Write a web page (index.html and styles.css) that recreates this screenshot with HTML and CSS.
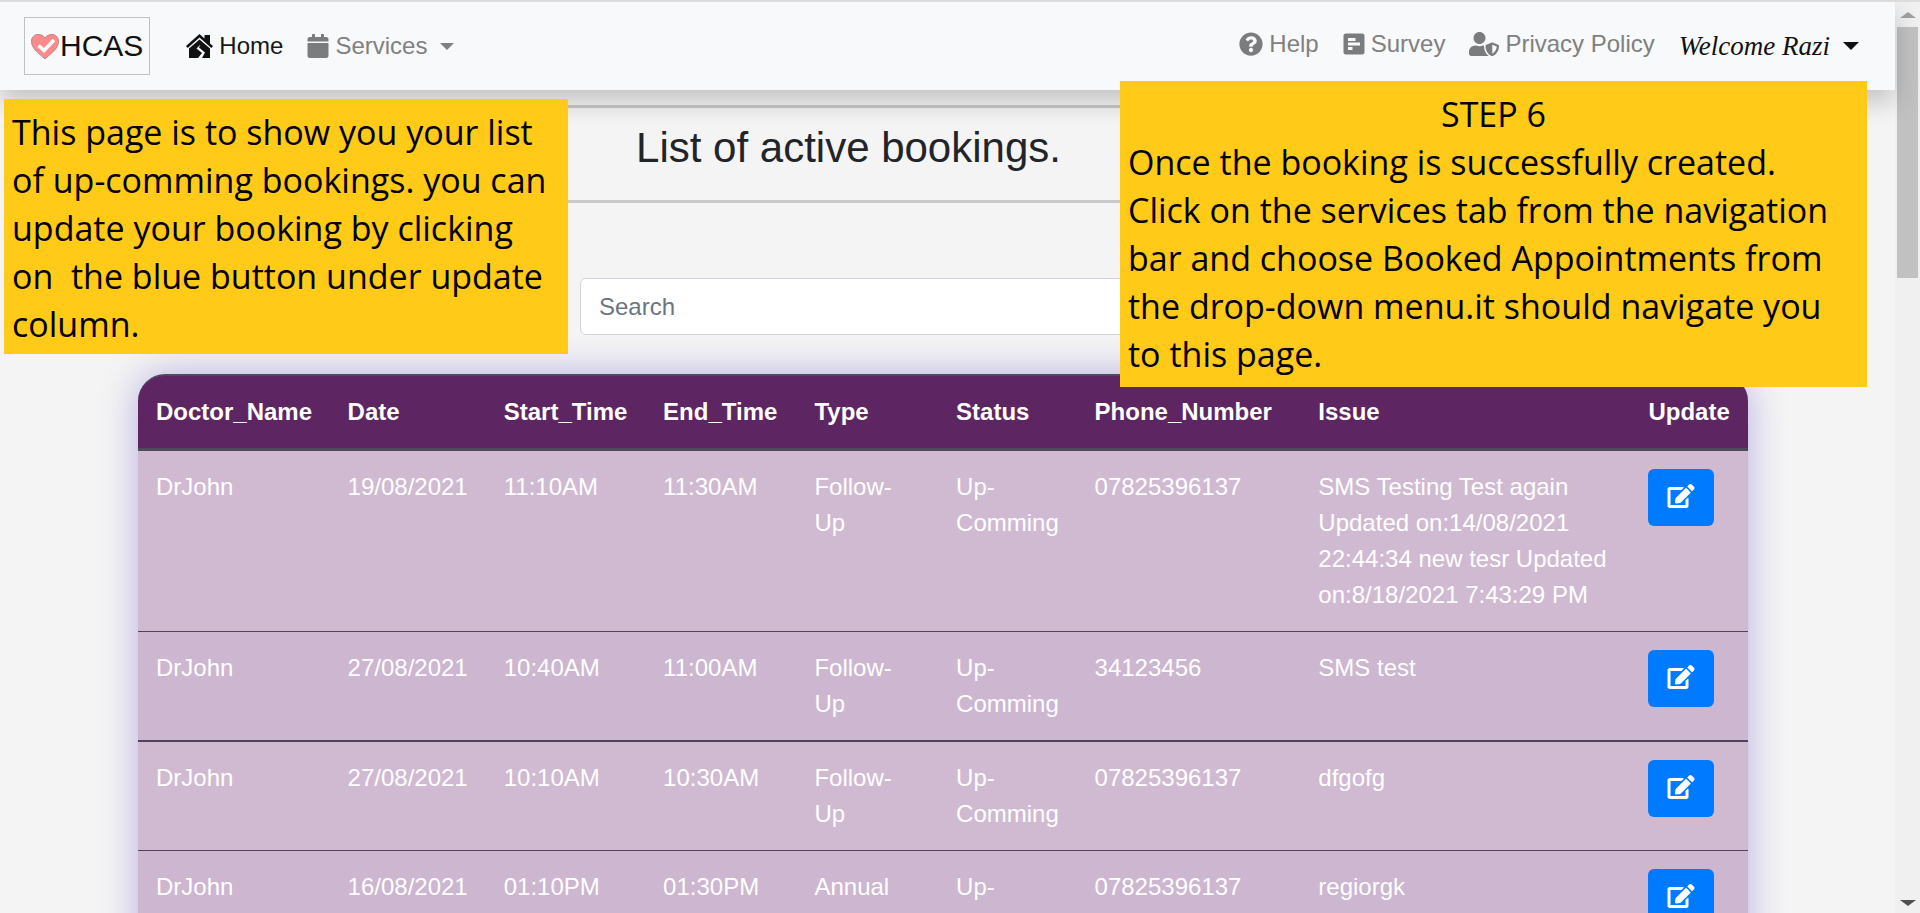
FILE: index.html
```html
<!DOCTYPE html>
<html lang="en">
<head>
<meta charset="utf-8">
<title>HCAS - Active bookings</title>
<link rel="stylesheet" href="styles.css">
</head>
<body>
<svg class="sprite" aria-hidden="true">
  <symbol id="edit" viewBox="0 0 576 512"><path d="M402.600 83.200l90.200 90.200c3.800 3.800 3.800 10 0 13.800L274.400 405.600l-92.800 10.300c-12.400 1.400-22.900-9.100-21.500-21.500l10.300-92.800L388.800 83.200c3.800-3.800 10-3.800 13.800 0zm162-22.900l-48.800-48.800c-15.200-15.200-39.900-15.200-55.200 0l-35.400 35.400c-3.800 3.800-3.800 10 0 13.800l90.200 90.200c3.800 3.800 10 3.800 13.800 0l35.400-35.400c15.200-15.300 15.200-40 0-55.200zM384 346.200V448H64V128h229.800c3.200 0 6.200-1.300 8.500-3.500l40-40c7.600-7.600 2.200-20.500-8.500-20.500H48C21.500 64 0 85.500 0 112v352c0 26.500 21.500 48 48 48h352c26.500 0 48-21.500 48-48V306.200c0-10.700-12.900-16-20.500-8.500l-40 40c-2.200 2.300-3.500 5.300-3.500 8.500z"/></symbol>
</svg>
<div class="window">
  <div class="page">
    <nav class="navbar">
      <a class="brand" href="#">
        <svg class="heart" viewBox="0 0 30 28" aria-hidden="true"><path d="M15 27C10 22 1.500 17 1.500 9.500 1.500 5 4.500 2.500 8 2.500c3 0 5.500 1 7 3.500 1.500-2.500 4-3.500 7-3.500 3.500 0 6.500 2.500 6.500 7C28.500 17 20 22 15 27z" fill="#fb8a8d" stroke="#b58a8e"/><path d="M8.500 13.500l5.500 5L24 8" fill="none" stroke="#fff" stroke-width="3.500"/></svg>HCAS</a>
      <ul class="links">
        <li><a class="link active" href="#"><svg class="ico home" viewBox="0 0 27 24" aria-hidden="true"><path d="M0 12L13.500 0l5 4.500V1H24v8.500L27 12l-1.700 2L13.500 3.500 1.700 14z"/><path fill-rule="evenodd" d="M13.500 5.500L24 14.500V24H16l3-5.500-6-5 1.500-3-4 4 5.500 4.500-4 5H3v-9.500z"/></svg>Home</a></li>
        <li><a class="link" href="#"><svg class="ico cal" viewBox="0 0 448 512" aria-hidden="true"><path d="M12 192h424c6.600 0 12 5.400 12 12v260c0 26.500-21.500 48-48 48H48c-26.500 0-48-21.500-48-48V204c0-6.600 5.400-12 12-12zm436-44v-36c0-26.500-21.500-48-48-48h-48V12c0-6.600-5.400-12-12-12h-40c-6.600 0-12 5.400-12 12v52H160V12c0-6.600-5.400-12-12-12h-40c-6.600 0-12 5.400-12 12v52H48C21.500 64 0 85.500 0 112v36c0 6.600 5.400 12 12 12h424c6.600 0 12-5.400 12-12z"/></svg>Services<span class="caret"></span></a></li>
      </ul>
      <ul class="links right">
        <li><a class="link" href="#"><svg class="ico round" viewBox="0 0 512 512" aria-hidden="true"><path d="M504 256c0 137-111 248-248 248S8 393 8 256C8 119.100 119 8 256 8s248 111.100 248 248zM262.700 90c-54.500 0-89.300 23-116.500 63.800-3.500 5.300-2.400 12.400 2.700 16.300l34.700 26.300c5.200 3.900 12.600 3 16.700-2.100 17.900-22.700 30.100-35.800 57.300-35.800 20.400 0 45.700 13.100 45.700 33 0 15-12.400 22.700-32.500 34C247.100 238.500 216 254.900 216 296v4c0 6.600 5.400 12 12 12h56c6.600 0 12-5.400 12-12v-1.300c0-28.500 83.200-29.600 83.200-106.700 0-58-60.200-102-116.500-102zM256 338c-25.400 0-46 20.600-46 46s20.600 46 46 46 46-20.600 46-46-20.600-46-46-46z"/></svg>Help</a></li>
        <li><a class="link" href="#"><svg class="ico cal" viewBox="0 0 448 512" aria-hidden="true"><path fill-rule="evenodd" d="M48 32h352c26.500 0 48 21.500 48 48v352c0 26.500-21.500 48-48 48H48c-26.500 0-48-21.500-48-48V80c0-26.500 21.500-48 48-48zM96 128v64h160v-64zM96 224v64h256v-64zM96 320v64h96v-64z"/></svg>Survey</a></li>
        <li><a class="link" href="#"><svg class="ico user" viewBox="0 0 640 512" aria-hidden="true"><path d="M622.300 271.100l-115.200-45c-4.100-1.600-12.600-3.700-22.200 0l-115.200 45c-10.700 4.200-17.700 14-17.700 24.900 0 111.600 68.700 188.800 132.900 213.900 9.600 3.700 18 1.600 22.200 0C558.400 489.900 640 420.500 640 296c0-10.900-7-20.700-17.700-24.900zM496 462.400V273.300l95.500 37.300c-5.600 87.100-60.900 135.400-95.500 151.800zM224 256c70.700 0 128-57.300 128-128S294.700 0 224 0 96 57.300 96 128s57.300 128 128 128zm96 40c0-2.500.8-4.800 1.100-7.200-2.500-.1-4.900-.8-7.500-.8h-16.700c-22.200 10.200-46.900 16-72.900 16s-50.600-5.800-72.900-16h-16.700C60.200 288 0 348.200 0 422.400V464c0 26.500 21.500 48 48 48h352c6.800 0 13.300-1.500 19.200-4-54-42.900-99.200-116.700-99.200-212z"/></svg>Privacy Policy</a></li>
        <li><a class="link welcome" href="#">Welcome Razi<span class="caret big"></span></a></li>
      </ul>
    </nav>
    <main class="main">
      <header class="title"><h1>List of active bookings.</h1></header>
      <div class="search"><input type="search" aria-label="Search" placeholder="Search"></div>
      <div class="card">
        <table class="bookings">
          <colgroup><col class="c-doc"><col class="c-date"><col class="c-start"><col class="c-end"><col class="c-type"><col class="c-status"><col class="c-phone"><col class="c-issue"><col class="c-upd"></colgroup>
          <thead><tr><th>Doctor_Name</th><th>Date</th><th>Start_Time</th><th>End_Time</th><th>Type</th><th>Status</th><th>Phone_Number</th><th>Issue</th><th>Update</th></tr></thead>
          <tbody>
            <tr><td>DrJohn</td><td>19/08/2021</td><td>11:10AM</td><td>11:30AM</td><td>Follow-Up</td><td>Up-Comming</td><td>07825396137</td><td>SMS Testing Test again Updated on:14/08/2021 22:44:34 new tesr Updated on:8/18/2021 7:43:29 PM</td><td><button class="btn" type="button" aria-label="Update booking"><svg><use href="#edit"/></svg></button></td></tr>
            <tr><td>DrJohn</td><td>27/08/2021</td><td>10:40AM</td><td>11:00AM</td><td>Follow-Up</td><td>Up-Comming</td><td>34123456</td><td>SMS test</td><td><button class="btn" type="button" aria-label="Update booking"><svg><use href="#edit"/></svg></button></td></tr>
            <tr><td>DrJohn</td><td>27/08/2021</td><td>10:10AM</td><td>10:30AM</td><td>Follow-Up</td><td>Up-Comming</td><td>07825396137</td><td>dfgofg</td><td><button class="btn" type="button" aria-label="Update booking"><svg><use href="#edit"/></svg></button></td></tr>
            <tr><td>DrJohn</td><td>16/08/2021</td><td>01:10PM</td><td>01:30PM</td><td>Annual</td><td>Up-Comming</td><td>07825396137</td><td>regiorgk</td><td><button class="btn" type="button" aria-label="Update booking"><svg><use href="#edit"/></svg></button></td></tr>
          </tbody>
        </table>
      </div>
    </main>
  </div>
  <div class="scrollbar" aria-hidden="true"><span class="arrow up"></span><span class="thumb"></span><span class="arrow down"></span></div>
  <aside class="note note-left">This page is to show you your list<br>of up-comming bookings. you can<br>update your booking by clicking<br>on&nbsp; the blue button under update<br>column.</aside>
  <aside class="note note-right"><h2>STEP 6</h2>Once the booking is successfully created.<br>Click on the services tab from the navigation<br>bar and choose Booked Appointments from<br>the drop-down menu.it should navigate you<br>to this page.</aside>
</div>
</body>
</html>
```
FILE: styles.css
```css
* { box-sizing: border-box; }
body {
  margin: 0;
  background: #f4f4f4;
  color: #212529;
  font: 24px/36px "Liberation Sans", Arial, sans-serif;
}
.sprite { position: absolute; width: 0; height: 0; }
.window {
  position: relative;
  display: flex;
  height: 100vh;
  overflow: hidden;
  border-top: 2px solid #dcdcdc;
}
.page { flex: 1; min-width: 0; }

/* navigation */
.navbar {
  position: relative;
  display: flex;
  align-items: center;
  padding: 15px 24px;
  background: #f8f9fa;
  box-shadow: 0 12px 24px rgba(0, 0, 0, .2);
}
.brand {
  display: flex;
  align-items: center;
  height: 58px;
  padding: 0 6px 0 5px;
  border: 1px solid #bfc1c3;
  color: #111;
  font-size: 30px;
  text-decoration: none;
}
.heart { width: 30px; height: 28px; }
.links {
  display: flex;
  align-items: center;
  gap: 24px;
  margin: 0;
  padding: 0 0 0 36px;
  list-style: none;
}
.links.right { margin-left: auto; padding: 0 12px 4px 0; }
.link {
  display: flex;
  align-items: center;
  gap: 6px;
  color: #7f8081;
  text-decoration: none;
  white-space: nowrap;
}
.ico { height: 24px; fill: #7b7c7d; }
.active { color: #16181b; }
.active .ico { fill: #111; }
.home { width: 27px; }
.cal { width: 22px; }
.round { width: 24px; }
.user { width: 30px; }
.caret {
  margin-left: 7px;
  border: 7px solid transparent;
  border-top-color: currentColor;
  border-bottom: 0;
}
.welcome {
  padding-top: 4px;
  color: #111;
  font-family: "Liberation Serif", "Times New Roman", serif;
  font-size: 27px;
  font-style: italic;
}
.caret.big { border-width: 8px 8px 0; }

/* heading and search */
.title {
  margin: 15px 30px 0;
  padding: 15px 198px 27px 0;
  border: solid #c9c9c9;
  border-width: 3px 0;
  text-align: center;
}
.title h1 { margin: 0; font-size: 42px; line-height: 50px; font-weight: 400; }
.search { display: flex; padding: 75px 580px 39px; }
.search input {
  flex: 1;
  min-width: 0;
  height: 57px;
  padding: 0 18px;
  border: 1px solid #ced4da;
  border-radius: 6px;
  background: #fff;
  font: inherit;
}
.search input::placeholder { color: #6c757d; }

/* bookings table */
.card {
  margin: 0 147px 0 138px;
  border-radius: 27px 27px 0 0;
  box-shadow: 0 0 38px #b8aee0;
}
.bookings {
  width: 100%;
  table-layout: fixed;
  border-spacing: 0;
  color: #fff;
}
.c-doc { width: 11.9%; }
.c-date { width: 9.7%; }
.c-start { width: 9.9%; }
.c-end { width: 9.4%; }
.c-type { width: 8.8%; }
.c-status { width: 8.6%; }
.c-phone { width: 13.9%; }
.c-issue { width: 20.5%; }
.c-upd { width: 7.3%; }
.bookings th, .bookings td { padding: 18px; text-align: left; vertical-align: top; }
.bookings th {
  background: #5d2662;
  border-top: 2px solid #4d4a5f;
  border-bottom: 3px solid #4d4a5a;
}
.bookings th:first-child { border-top-left-radius: 27px; }
.bookings th:last-child { border-top-right-radius: 27px; padding-right: 0; }
.bookings td { border-bottom: 1px solid #53425d; }
.bookings tr:nth-child(2) td { border-bottom-width: 2px; }
.bookings tbody tr { background: #d0bad2; }
.bookings tbody tr:nth-child(even) { background: #ccb6d0; }
.btn {
  display: flex;
  align-items: center;
  justify-content: center;
  width: 66px;
  height: 57px;
  padding: 0 0 3px;
  border: 0;
  border-radius: 6px;
  background: #007bff;
}
.btn svg { width: 28px; height: 24px; fill: #fff; }
.bookings td:last-child { padding-bottom: 0; }

/* window scrollbar */
.scrollbar {
  display: flex;
  flex-direction: column;
  align-items: center;
  width: 25px;
  background: #f0f0f0;
}
.arrow { border: 8px solid transparent; }
.up { margin: 10px 0 9px; border-top: 0; border-bottom: 6px solid #a0a0a0; }
.thumb { width: 21px; height: 251px; background: #c1c1c1; }
.down { margin: auto 0 7px; border-bottom: 0; border-top: 6px solid #505050; }

/* instruction notes laid over the page */
.note {
  position: absolute;
  padding: 9px 8px 6px;
  background: #ffca18;
  color: #000;
  font: 34px/48px "Open Sans", "Noto Sans", sans-serif;
  white-space: nowrap;
}
.note-left { left: 4px; top: 97px; width: 564px; }
.note-right { left: 1120px; top: 79px; width: 747px; padding-bottom: 9px; }
.note h2 { margin: 0; font: inherit; text-align: center; }
```
